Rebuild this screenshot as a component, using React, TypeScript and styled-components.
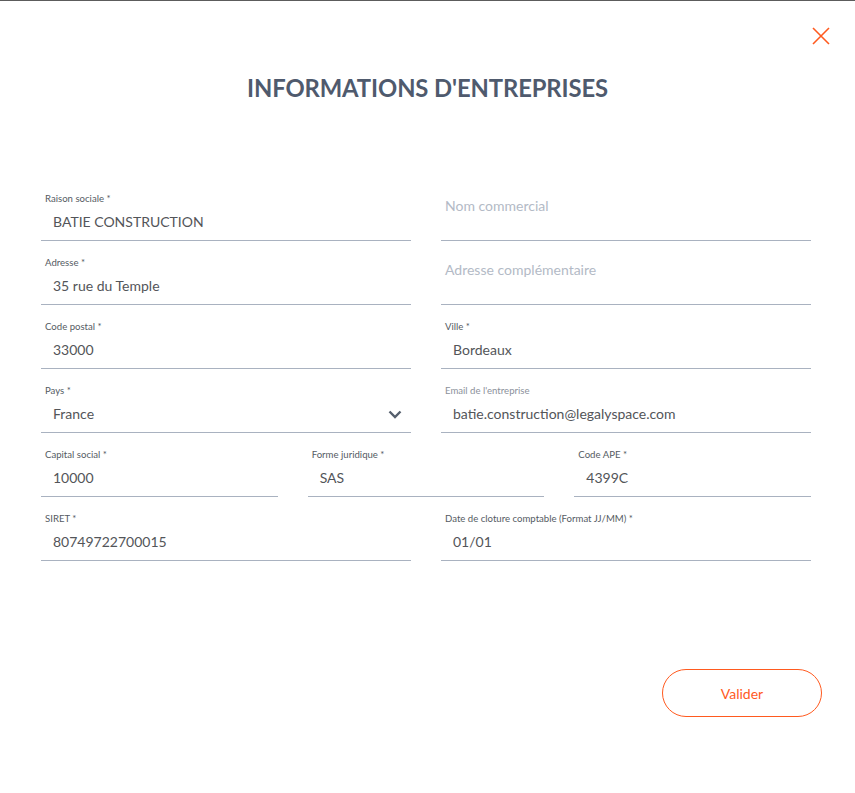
import styled, { createGlobalStyle } from 'styled-components';

const GlobalStyle = createGlobalStyle`
  html, body {
    margin: 0;
    padding: 0;
    background: #ffffff;
  }
  body {
    font-family: Lato, "Open Sans", Arial, sans-serif;
  }
`;

const Modal = styled.div`
  position: relative;
  width: 855px;
  min-height: 793px;
  box-sizing: border-box;
  border-top: 1px solid #5c5c5c;
  background: #ffffff;
`;

const CloseButton = styled.button`
  position: absolute;
  top: 25px;
  right: 24px;
  width: 20px;
  height: 20px;
  padding: 0;
  border: none;
  background: transparent;
  cursor: pointer;
  display: flex;
  align-items: center;
  justify-content: center;
`;

const Title = styled.h1`
  margin: 0;
  padding-top: 73px;
  text-align: center;
  font-size: 23.8px;
  line-height: 29px;
  font-weight: 700;
  color: #4f5a6d;
  letter-spacing: -0.1px;
`;

const Form = styled.form`
  margin: 74px 44px 0 41px;
  display: grid;
  grid-template-columns: repeat(6, 1fr);
  column-gap: 30px;
`;

const Field = styled.div<{ $span: number }>`
  grid-column: span ${({ $span }) => $span};
  position: relative;
  height: 64px;
  box-sizing: border-box;
  border-bottom: 1px solid #a9b2c0;
  padding-top: 16px;
`;

const Label = styled.label<{ $muted?: boolean }>`
  display: block;
  padding-left: 4px;
  font-size: 9.6px;
  line-height: 12px;
  color: ${({ $muted }) => ($muted ? '#8b919b' : '#555b63')};
`;

const Placeholder = styled.label`
  display: block;
  padding-left: 4px;
  padding-top: 3px;
  font-size: 14px;
  line-height: 20px;
  color: #b3bac6;
`;

const Value = styled.div`
  margin-top: 7px;
  padding-left: 12px;
  font-size: 14px;
  line-height: 20px;
  color: #535559;
`;

const Chevron = styled.span`
  position: absolute;
  right: 9px;
  top: 41px;
  display: flex;
`;

const Footer = styled.div`
  display: flex;
  justify-content: flex-end;
  margin-top: 108px;
  padding-right: 33px;
`;

const SubmitButton = styled.button`
  width: 160px;
  height: 48px;
  border: 1px solid #ff5a1f;
  border-radius: 24px;
  background: #ffffff;
  color: #ff5a1f;
  font-family: Lato, "Open Sans", Arial, sans-serif;
  font-size: 14px;
  cursor: pointer;
`;

type FieldDef = {
  label: string;
  value?: string;
  span: number;
  muted?: boolean;
  select?: boolean;
};

const fields: FieldDef[] = [
  { label: 'Raison sociale *', value: 'BATIE CONSTRUCTION', span: 3 },
  { label: 'Nom commercial', span: 3 },
  { label: 'Adresse *', value: '35 rue du Temple', span: 3 },
  { label: 'Adresse complémentaire', span: 3 },
  { label: 'Code postal *', value: '33000', span: 3 },
  { label: 'Ville *', value: 'Bordeaux', span: 3 },
  { label: 'Pays *', value: 'France', span: 3, select: true },
  { label: "Email de l'entreprise", value: 'batie.construction@legalyspace.com', span: 3, muted: true },
  { label: 'Capital social *', value: '10000', span: 2 },
  { label: 'Forme juridique *', value: 'SAS', span: 2 },
  { label: 'Code APE *', value: '4399C', span: 2 },
  { label: 'SIRET *', value: '80749722700015', span: 3 },
  { label: 'Date de cloture comptable (Format JJ/MM) *', value: '01/01', span: 3 },
];

const App = () => {
  return (
    <>
      <GlobalStyle />
      <Modal>
        <CloseButton type="button" aria-label="Fermer">
          <svg width="18" height="18" viewBox="0 0 18 18">
            <path d="M1 1 L17 17 M17 1 L1 17" stroke="#ff5a1f" strokeWidth="1.6" fill="none" />
          </svg>
        </CloseButton>
        <Title>INFORMATIONS D'ENTREPRISES</Title>
        <Form>
          {fields.map(({ label, value, span, muted, select }) => (
            <Field key={label} $span={span}>
              {value !== undefined ? (
                <>
                  <Label $muted={muted}>{label}</Label>
                  <Value>{value}</Value>
                </>
              ) : (
                <Placeholder>{label}</Placeholder>
              )}
              {select && (
                <Chevron>
                  <svg width="14" height="9" viewBox="0 0 14 9">
                    <path d="M1.5 1.5 L7 7 L12.5 1.5" stroke="#555f6d" strokeWidth="2.4" fill="none" />
                  </svg>
                </Chevron>
              )}
            </Field>
          ))}
        </Form>
        <Footer>
          <SubmitButton type="button">Valider</SubmitButton>
        </Footer>
      </Modal>
    </>
  );
};

export default App;
